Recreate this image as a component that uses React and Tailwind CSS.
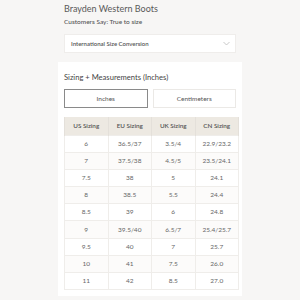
const rows = [
  ['6', '36.5/37', '3.5/4', '22.9/23.2'],
  ['7', '37.5/38', '4.5/5', '23.5/24.1'],
  ['7.5', '38', '5', '24.1'],
  ['8', '38.5', '5.5', '24.4'],
  ['8.5', '39', '6', '24.8'],
  ['9', '39.5/40', '6.5/7', '25.4/25.7'],
  ['9.5', '40', '7', '25.7'],
  ['10', '41', '7.5', '26.0'],
  ['11', '42', '8.5', '27.0'],
]

const heads = ['US Sizing', 'EU Sizing', 'UK Sizing', 'CN Sizing']

export default function App() {
  return (
    <div className="h-[300px] w-[300px] overflow-hidden bg-[#f7f6f5] font-['Lato',sans-serif] text-[#555]">
      <div className="mx-auto w-[184px] px-[6px]">
        <div className="pt-[2px] text-[9px] leading-[13px] text-[#5a5a5a]">Brayden Western Boots</div>
        <div className="mt-[1px] text-[6.5px] leading-[12px] font-medium text-[#555]">Customers Say: True to size</div>
        <div className="mt-[6px] flex h-[19px] items-center justify-between border border-[#efedeb] bg-white pl-[6px] pr-[5px]">
          <span className="text-[6px] font-semibold text-[#555]">International Size Conversion</span>
          <svg width="7" height="5" viewBox="0 0 7 5" fill="none">
            <path d="M0.5 1 L3.5 4 L6.5 1" stroke="#bbb" strokeWidth="0.8" />
          </svg>
        </div>
      </div>
      <div className="mx-auto mt-[9px] w-[184px] bg-white px-[6px] pb-[6px] pt-[8px]">
        <div className="text-[7.6px] leading-[14px] text-[#444]">Sizing + Measurements (Inches)</div>
        <div className="mt-[5px] flex gap-[5px]">
          <div className="flex h-[19px] flex-1 items-center justify-center border border-[#8a8a8a] text-[6.5px] text-[#555]">Inches</div>
          <div className="flex h-[19px] flex-1 items-center justify-center border border-[#ebe9e6] text-[6.5px] text-[#555]">Centimeters</div>
        </div>
        <table className="mt-[9px] w-[175px] table-fixed border-collapse text-center">
          <thead>
            <tr className="h-[18px] bg-[#ede9e2]">
              {heads.map((h) => (
                <th key={h} className="border-x border-[#e4e0da] text-[6.3px] font-semibold text-[#555]">{h}</th>
              ))}
            </tr>
          </thead>
          <tbody>
            {rows.map((r, i) => (
              <tr key={i} className={i % 2 === 1 ? 'h-[17.2px] bg-[#fcfbfa]' : 'h-[17.2px] bg-white'}>
                {r.map((c, j) => (
                  <td key={j} className="border border-[#efedea] text-[6.5px] text-[#666]">{c}</td>
                ))}
              </tr>
            ))}
          </tbody>
        </table>
      </div>
    </div>
  )
}
